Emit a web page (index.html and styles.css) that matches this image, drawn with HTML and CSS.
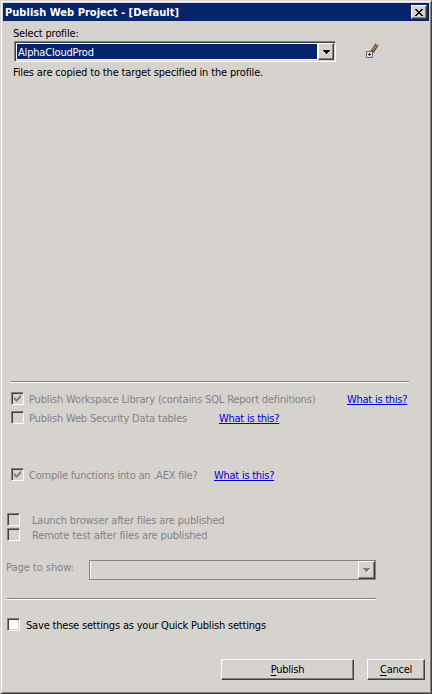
FILE: index.html
```html
<!DOCTYPE html>
<html lang="en">
<head>
<meta charset="utf-8">
<title>Publish Web Project</title>
<link rel="stylesheet" href="styles.css">
</head>
<body>
<div class="window">
  <header class="titlebar">
    <h1>Publish Web Project - [Default]</h1>
    <button class="close" aria-label="Close"><svg width="8" height="7" viewBox="0 0 8 7" shape-rendering="crispEdges"><path d="M0 0h2v1h1v1h2V1h1V0h2v1H7v1H6v1H5v1h1v1h1v1h1v1H6V6H5V5H3v1H2v1H0V6h1V5h1V4h1V3H2V2H1V1H0z"/></svg></button>
  </header>
  <main class="content">
    <section class="profile">
      <div class="text t-select">Select profile:</div>
      <div class="profile-row">
        <div class="combo"><div class="value text">AlphaCloudProd</div><div class="arrow"><svg width="7" height="4" viewBox="0 0 7 4" shape-rendering="crispEdges"><path d="M0 0h7v1H6v1H5v1H4v1H3V3H2V2H1V1H0z"/></svg></div></div>
        <svg class="edit" width="13" height="16" viewBox="0 0 13 16"><path d="M6 9l5-7.500" stroke="#5c4035" stroke-width="3.800"/><path d="M6.500 7.500l3-4" stroke="#c09b48" stroke-width="1.400"/><path d="M9.500 3.500l1.500-2" stroke="#bd7770" stroke-width="1.500"/><path d="M4.500 10.500L7 8" stroke="#303030" stroke-width="1.300"/><path d="M.5 8.500h6v6h-6z" fill="#e4e4e4" stroke="#666"/><path d="M2 11h3v1H2zM3 10h1v3H3z" fill="#222" shape-rendering="crispEdges"/></svg>
      </div>
      <div class="text t-files">Files are copied to the target specified in the profile.</div>
    </section>
    <hr class="rule wide">
    <div class="option library disabled"><span class="check"><svg width="7" height="7" viewBox="0 0 7 7" shape-rendering="crispEdges"><path d="M0 2h1v1h1v1h1V3h1V2h1V1h1V0h1v3H6v1H5v1H4v1H3v1H2V6H1V5H0z"/></svg></span><span class="text label t-library">Publish Workspace Library (contains SQL Report definitions)</span><a class="text" href="#">What is this?</a></div>
    <div class="option security disabled"><span class="check"></span><span class="text label t-security">Publish Web Security Data tables</span><a class="text" href="#">What is this?</a></div>
    <div class="option compile disabled"><span class="check"><svg width="7" height="7" viewBox="0 0 7 7" shape-rendering="crispEdges"><path d="M0 2h1v1h1v1h1V3h1V2h1V1h1V0h1v3H6v1H5v1H4v1H3v1H2V6H1V5H0z"/></svg></span><span class="text label t-compile">Compile functions into an .AEX file?</span><a class="text" href="#">What is this?</a></div>
    <div class="option launch disabled"><span class="check"></span><span class="text label t-launch">Launch browser after files are published</span></div>
    <div class="option remote disabled"><span class="check"></span><span class="text label t-remote">Remote test after files are published</span></div>
    <div class="page-row"><span class="text t-page">Page to show:</span><div class="page-combo"><div class="arrow"><svg width="8" height="5" viewBox="0 0 8 5" shape-rendering="crispEdges"><path d="M7 1h1v1H7v1H6v1H5v1H4V4h1V3h1V2h1z" fill="#fff"/><path d="M0 0h7v1H6v1H5v1H4v1H3V3H2V2H1V1H0z" fill="#808080"/></svg></div></div></div>
    <hr class="rule narrow">
    <div class="option save"><span class="check"></span><span class="text label t-save">Save these settings as your Quick Publish settings</span></div>
    <footer class="actions">
      <button class="button publish text"><span><u>P</u>ublish</span></button>
      <button class="button cancel text"><span><u>C</u>ancel</span></button>
    </footer>
  </main>
</div>
</body>
</html>
```
FILE: styles.css
```css
* { box-sizing: border-box; }
body { margin: 0; background: #d6d3ce; }
svg { display: block; flex: none; }
.window {
  width: 432px; height: 694px; overflow: hidden;
  border: 1px solid; border-color: #d6d3ce #404040 #404040 #d6d3ce;
  background: #d6d3ce;
  box-shadow: inset 1px 1px #fff, inset -1px -1px #808080;
  padding: 2px;
  font-family: "DejaVu Sans Condensed", "DejaVu Sans", sans-serif;
  font-stretch: condensed;
  font-size: 11px; line-height: 16px;
}
.text { font-size: 11px; line-height: 16px; letter-spacing: -0.25px; white-space: nowrap; }
.titlebar {
  display: flex; align-items: center; justify-content: space-between;
  width: 426px; height: 18px; padding: 0 2px; background: #08246b; color: #fff;
}
.titlebar h1 { margin: 0; padding-top: 2px; font-size: 11px; line-height: 16px; letter-spacing: 0.03px; white-space: nowrap; }
.close, .arrow, .button {
  display: flex; align-items: center; justify-content: center; padding: 0;
  background: #d6d3ce; border: 1px solid; border-color: #fff #404040 #404040 #fff;
  box-shadow: inset -1px -1px #808080;
}
.close { width: 16px; height: 14px; padding-right: 1px; }
.content { display: flex; flex-direction: column; padding-left: 3px; }
.profile { height: 360px; padding: 5px 0 0 7px; }
.profile-row { display: flex; margin: -1px 0 0 1px; }
.combo {
  display: flex; width: 322px; height: 21px; padding: 1px; background: #fff;
  border: 1px solid; border-color: #808080 #fff #fff #808080;
  box-shadow: inset 1px 1px #404040, inset -1px -1px #d6d3ce;
}
.combo .value { flex: 1; margin: 1px; padding-left: 1px; background: #08246b; color: #fff; line-height: 17px; letter-spacing: -0.18px; }
.combo .arrow { width: 16px; height: 17px; }
.edit { margin: 2px 0 0 30px; }
.t-select { letter-spacing: -0.18px; }
.t-files { margin-top: 3px; letter-spacing: -0.16px; }
.rule { margin: 0; border: 0; height: 2px; background: #fff; border-top: 1px solid #808080; }
.wide { width: 398px; margin-left: 5px; }
.narrow { width: 369px; margin: 18px 0 0 1px; }
.option { display: flex; height: 14px; margin-left: 5px; }
.check {
  display: flex; align-items: center; justify-content: center; flex: none;
  width: 13px; height: 13px; background: #fff; border: 1px solid;
  border-color: #808080 #fff #fff #808080;
  box-shadow: inset 1px 1px #404040, inset -1px -1px #d6d3ce;
}
.disabled .check { background: #d6d3ce; fill: #808080; }
.disabled .label, .t-page { color: #848284; }
.label { margin-left: 5px; flex: none; }
a { color: #0000d8; text-decoration: underline; text-underline-offset: 1px; }
.library { margin-top: 9px; }
.library .label { width: 318px; letter-spacing: -0.17px; }
.security { margin-top: 5px; }
.security .label { width: 190px; letter-spacing: -0.18px; }
.compile { margin-top: 43px; }
.compile .label { width: 185px; letter-spacing: -0.22px; }
.launch { margin: 31px 0 0 1px; }
.remote { margin: 1px 0 0 1px; }
.launch .label, .remote .label { margin-left: 12px; }
.launch .label { letter-spacing: -0.16px; }
.remote .label { letter-spacing: -0.14px; }
.page-row { display: flex; height: 20px; margin-top: 18px; }
.t-page { width: 83px; flex: none; letter-spacing: -0.04px; }
.page-combo { display: flex; justify-content: flex-end; width: 287px; border: 1px solid #848284; box-shadow: inset 1px 0 #fff; }
.page-combo .arrow { width: 17px; height: 18px; }
.save { margin: 18px 0 0 1px; }
.save .label { margin-left: 6px; letter-spacing: -0.19px; }
.actions { display: flex; gap: 13px; margin: 27px 0 0 215px; }
.button { height: 21px; color: #000; font-family: inherit; font-stretch: condensed; }
.button u { text-underline-offset: 2px; }
.publish { width: 133px; }
.cancel { width: 58px; }
```
